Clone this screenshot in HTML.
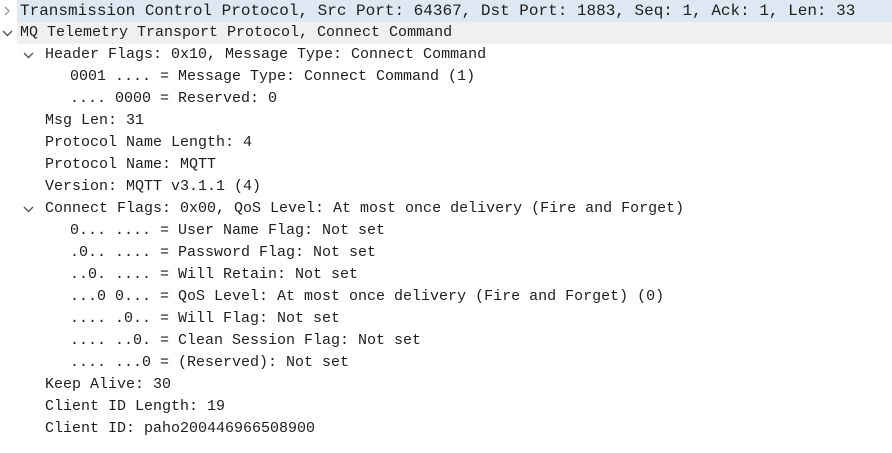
<!DOCTYPE html>
<html><head><style>
body{margin:0;width:892px;height:453px;background:#fff;overflow:hidden;font-family:"Liberation Mono",monospace;font-size:15px;color:#1e1e1e}
.r{position:absolute;left:0;right:0;height:22px;line-height:22px;white-space:pre}
.r span.t{position:absolute}
.bg1{background:#dee8f3;left:17px}
.bg2{background:#f0f0f0;left:17px}
svg{position:absolute;top:6px}
</style></head><body>
<div class="r bg1" style="top:0;font-size:16px"><svg style="left:-15px" width="10" height="10"><path d="M3 1 L7 5 L3 9" fill="none" stroke="#999" stroke-width="1.4"/></svg><span class="t" style="left:3px">Transmission Control Protocol, Src Port: 64367, Dst Port: 1883, Seq: 1, Ack: 1, Len: 33</span></div>
<div class="r bg2" style="top:22px"><svg style="left:-15px" width="12" height="10"><path d="M1 3 L5.5 7.5 L10 3" fill="none" stroke="#555" stroke-width="1.4"/></svg><span class="t" style="left:3px">MQ Telemetry Transport Protocol, Connect Command</span></div>
<div class="r" style="top:44px"><svg style="left:23px" width="12" height="10"><path d="M1 3 L5.5 7.5 L10 3" fill="none" stroke="#555" stroke-width="1.4"/></svg><span class="t" style="left:45px">Header Flags: 0x10, Message Type: Connect Command</span></div>
<div class="r" style="top:66px"><span class="t" style="left:70px">0001 .... = Message Type: Connect Command (1)</span></div>
<div class="r" style="top:88px"><span class="t" style="left:70px">.... 0000 = Reserved: 0</span></div>
<div class="r" style="top:110px"><span class="t" style="left:45px">Msg Len: 31</span></div>
<div class="r" style="top:132px"><span class="t" style="left:45px">Protocol Name Length: 4</span></div>
<div class="r" style="top:154px"><span class="t" style="left:45px">Protocol Name: MQTT</span></div>
<div class="r" style="top:176px"><span class="t" style="left:45px">Version: MQTT v3.1.1 (4)</span></div>
<div class="r" style="top:198px"><svg style="left:23px" width="12" height="10"><path d="M1 3 L5.5 7.5 L10 3" fill="none" stroke="#555" stroke-width="1.4"/></svg><span class="t" style="left:45px">Connect Flags: 0x00, QoS Level: At most once delivery (Fire and Forget)</span></div>
<div class="r" style="top:220px"><span class="t" style="left:70px">0... .... = User Name Flag: Not set</span></div>
<div class="r" style="top:242px"><span class="t" style="left:70px">.0.. .... = Password Flag: Not set</span></div>
<div class="r" style="top:264px"><span class="t" style="left:70px">..0. .... = Will Retain: Not set</span></div>
<div class="r" style="top:286px"><span class="t" style="left:70px">...0 0... = QoS Level: At most once delivery (Fire and Forget) (0)</span></div>
<div class="r" style="top:308px"><span class="t" style="left:70px">.... .0.. = Will Flag: Not set</span></div>
<div class="r" style="top:330px"><span class="t" style="left:70px">.... ..0. = Clean Session Flag: Not set</span></div>
<div class="r" style="top:352px"><span class="t" style="left:70px">.... ...0 = (Reserved): Not set</span></div>
<div class="r" style="top:374px"><span class="t" style="left:45px">Keep Alive: 30</span></div>
<div class="r" style="top:396px"><span class="t" style="left:45px">Client ID Length: 19</span></div>
<div class="r" style="top:418px"><span class="t" style="left:45px">Client ID: paho200446966508900</span></div>
</body></html>
